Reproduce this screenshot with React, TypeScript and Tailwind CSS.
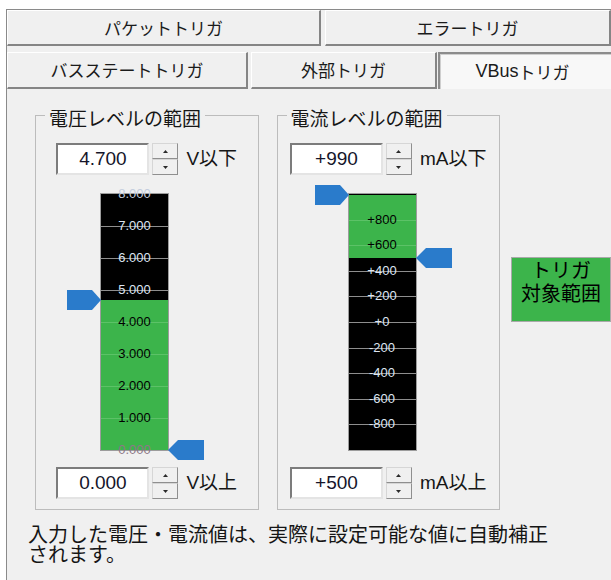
import React from "react";

const LAT = "font-['Liberation_Sans','Noto_Sans_CJK_JP',sans-serif]";

type Tone = "light" | "dark" | "top" | "bottom";
type Tick = { y: number; label: string; tone: Tone };

function Marker({ side, top, left }: { side: "left" | "right"; top: number; left: number }) {
  return (
    <svg
      className="absolute"
      style={{ top, left }}
      width={side === "left" ? 34 : 36}
      height={20}
      viewBox={side === "left" ? "0 0 34 20" : "0 0 36 20"}
    >
      <polygon
        points={side === "left" ? "0,0 25,0 34,10 25,20 0,20" : "0,10 10,0 36,0 36,20 10,20"}
        fill="#2a7bcb"
      />
    </svg>
  );
}

function TickLabel({ t }: { t: Tick }) {
  const base = "absolute left-0 right-0 text-center text-[13px] leading-[14px] font-['Liberation_Sans',sans-serif]";
  if (t.tone === "dark") {
    return (
      <div className={`${base} text-black`} style={{ top: t.y - 7 }}>
        {t.label}
      </div>
    );
  }
  if (t.tone === "top") {
    return (
      <div className={`${base} text-[#c4cede]`} style={{ top: t.y - 7 }}>
        {t.label}
      </div>
    );
  }
  if (t.tone === "bottom") {
    return (
      <div className={`${base} text-[#8e7888]`} style={{ top: t.y - 7 }}>
        {t.label}
      </div>
    );
  }
  return (
    <div className={`${base} text-[#dde5f2]`} style={{ top: t.y - 7 }}>
      {t.label}
    </div>
  );
}

function Scale({
  greenTop,
  greenBottom,
  ticks,
  lines,
  markers,
}: {
  greenTop: number;
  greenBottom: number;
  ticks: Tick[];
  lines: number[];
  markers: { side: "left" | "right"; y: number }[];
}) {
  return (
    <div className="relative h-[292px] w-[136px] pt-[19px]">
      <div className="relative ml-[34px] h-[256px] w-[67px] bg-black shadow-[0_0_0_1px_#9c9c9c]">
        <div
          className="absolute left-0 right-0 bg-[#3cb44b]"
          style={{ top: greenTop, height: greenBottom - greenTop }}
        />
        {lines.map((y) => {
          const inGreen = y > greenTop && y < greenBottom;
          return (
            <div
              key={y}
              className={inGreen ? "absolute left-0 right-0 h-px bg-[#5cc267]" : "absolute left-0 right-0 h-px bg-[#8e8e8e]"}
              style={{ top: y }}
            />
          );
        })}
        {ticks.map((t) => (
          <TickLabel key={t.label} t={t} />
        ))}
      </div>
      {markers.map((m, i) => (
        <Marker key={i} side={m.side} top={19 + m.y - 10} left={m.side === "left" ? 0 : 101} />
      ))}
    </div>
  );
}

function SpinBtn({ up }: { up?: boolean }) {
  return (
    <div className="flex h-[16px] items-center justify-center border border-b-[#8f8f8f] border-l-[#d6d6d6] border-r-[#8f8f8f] border-t-[#d6d6d6] bg-[#f0f0f0]">
      <svg width="5" height="3" viewBox="0 0 5 3">
        <polygon points={up ? "2.5,0 5,3 0,3" : "0,0 5,0 2.5,3"} fill="#2a2a2a" />
      </svg>
    </div>
  );
}

function SpinRow({ value, label }: { value: string; label: string }) {
  return (
    <div className="flex h-[32px] items-center justify-center">
      <div
        className={`flex h-[32px] w-[93px] items-center justify-center border-2 border-b-[#e4e4e4] border-l-[#7c7c7c] border-r-[#e4e4e4] border-t-[#7c7c7c] bg-white text-[19px] text-[#15152a] ${LAT}`}
      >
        {value}
      </div>
      <div className="ml-[3px] flex w-[26px] flex-col">
        <SpinBtn up />
        <SpinBtn />
      </div>
      <div className={`ml-[8px] text-[19px] leading-[32px] text-[#161616] ${LAT}`}>{label}</div>
    </div>
  );
}

function Group({
  title,
  children,
  className,
}: {
  title: string;
  children: React.ReactNode;
  className?: string;
}) {
  return (
    <fieldset className={`w-[224px] border border-[#bcbcbc] px-0 pb-[10px] pt-[18px] ${className ?? ""}`}>
      <legend className="ml-[9px] px-[4px] text-[19px] leading-[20px] text-[#161616]">
        <span className="relative top-[3px]">{title}</span>
      </legend>
      {children}
    </fieldset>
  );
}

const tabBase =
  "flex items-center justify-center bg-[#f0f0f0] border-t border-l border-t-white border-l-white border-r-2 border-b-2 border-r-[#858585] border-b-[#858585] text-[17px] text-[#1b1b1b]";

export default function App() {
  const vTicks: Tick[] = [8, 7, 6, 5, 4, 3, 2, 1, 0].map((v) => {
    const y = (8 - v) * 32;
    let tone: Tone = v >= 5 ? "light" : "dark";
    if (v === 8) tone = "top";
    if (v === 0) tone = "bottom";
    return { y, label: v.toFixed(3), tone };
  });
  const vLines = [1, 2, 3, 4, 5, 6, 7].map((i) => i * 32);

  const cVals = [800, 600, 400, 200, 0, -200, -400, -600, -800];
  const cTicks: Tick[] = cVals.map((v) => {
    const y = (1000 - v) * 0.128;
    const tone: Tone = v >= 600 ? "dark" : "light";
    return {
      y,
      label: v > 0 ? `+${v}` : v === 0 ? "+0" : `${v}`,
      tone,
    };
  });
  const cLines = cVals.map((v) => (1000 - v) * 0.128);

  return (
    <div className="h-[580px] w-[611px] overflow-hidden bg-white pl-[6px] pt-[9px] font-['Noto_Sans_CJK_JP',sans-serif]">
      <div className="flex h-full flex-col border-l border-t border-[#8a8a8a] bg-[#f0f0f0]">
        {/* tab row 1 */}
        <div className="flex h-[36px] shrink-0">
          <div className={`${tabBase} w-[314px]`}>パケットトリガ</div>
          <div className={`${tabBase} ml-[4px] flex-1 border-l-[#a8a8a8]`}>エラートリガ</div>
        </div>
        {/* tab row 2 */}
        <div className="flex h-[43px] shrink-0 pt-[6px]">
          <div className={`${tabBase} w-[241px]`}>バスステートトリガ</div>
          <div className={`${tabBase} ml-[3px] w-[186px]`}>外部トリガ</div>
          <div className="ml-[1px] flex flex-1 items-center justify-center border-l-2 border-t-2 border-[#8c8c8c] bg-[#f8f8f8] pr-[6px] text-[17px] text-[#1b1b1b] shadow-[inset_1px_1px_0_#cfcfcf]">
            <span className={`${LAT} text-[18px]`}>VBus</span>
            <span>トリガ</span>
          </div>
        </div>
        {/* body */}
        <div className="min-h-0 flex-1 pl-[21px] pt-[16px]">
          <div className="ml-[7px] flex items-start">
            <Group title="電圧レベルの範囲">
              <SpinRow value="4.700" label="V以下" />
              <div className="ml-[31px]">
                <Scale
                  greenTop={105.6}
                  greenBottom={256}
                  ticks={vTicks}
                  lines={vLines}
                  markers={[
                    { side: "left", y: 105.6 },
                    { side: "right", y: 256 },
                  ]}
                />
              </div>
              <SpinRow value="0.000" label="V以上" />
            </Group>
            <Group title="電流レベルの範囲" className="ml-[18px]">
              <SpinRow value="+990" label="mA以下" />
              <div className="ml-[37px]">
                <Scale
                  greenTop={1.28}
                  greenBottom={64}
                  ticks={cTicks}
                  lines={cLines}
                  markers={[
                    { side: "left", y: 1.28 },
                    { side: "right", y: 64 },
                  ]}
                />
              </div>
              <SpinRow value="+500" label="mA以上" />
            </Group>
            <div className="ml-[11px] mt-[152px] h-[65px] w-[100px] shrink-0 border border-[#a9a9a9] bg-[#3cb44b] text-center text-[20px] leading-[23px] text-black">
              トリガ
              <br />
              対象範囲
            </div>
          </div>
          <p className="mt-[14px] w-[530px] text-[20px] leading-[20px] text-[#151515]">
            入力した電圧・電流値は、実際に設定可能な値に自動補正されます。
          </p>
        </div>
      </div>
    </div>
  );
}
